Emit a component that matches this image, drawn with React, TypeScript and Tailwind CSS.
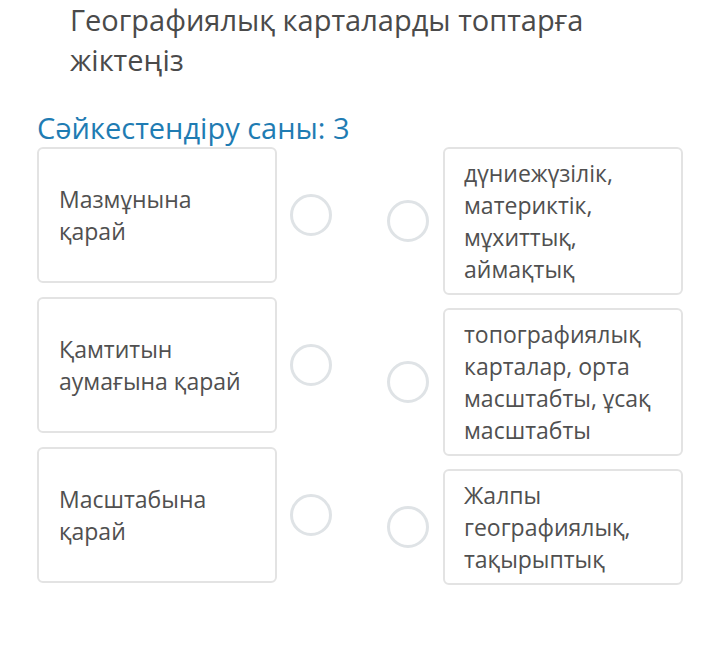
const left = [
  ["Мазмұнына", "қарай"],
  ["Қамтитын", "аумағына қарай"],
  ["Масштабына", "қарай"],
];

const right = [
  ["дүниежүзілік,", "материктік,", "мұхиттық,", "аймақтық"],
  ["топографиялық", "карталар, орта", "масштабты, ұсақ", "масштабты"],
  ["Жалпы", "географиялық,", "тақырыптық"],
];

function Dot() {
  return <div className="h-[42px] w-[42px] shrink-0 rounded-full border-[3px] border-[#dfe3e6] bg-white" />;
}

export default function App() {
  return (
    <div className="h-[654px] w-[720px] bg-white font-['Open_Sans',sans-serif]">
      <h1 className="pl-[70px] pr-[100px] text-[29px] leading-[40px] text-[#4a4a4a]">
        Географиялық карталарды топтарға жіктеңіз
      </h1>
      <div className="mt-[30px] pl-[37px] text-[29px] leading-[36px] text-[#1f7cb3]">
        Сәйкестендіру саны: 3
      </div>
      <div className="mt-[1px] flex pl-[37px]">
        <div className="flex flex-col gap-[14px]">
          {left.map((lines, i) => (
            <div key={i} className="flex items-center">
              <div className="flex h-[136px] w-[240px] flex-col justify-center rounded-[6px] border-2 border-[#e3e3e3] px-[20px] text-[23px] leading-[32px] text-[#505050]">
                {lines.map((l) => (
                  <span key={l}>{l}</span>
                ))}
              </div>
              <div className="ml-[13px]">
                <Dot />
              </div>
            </div>
          ))}
        </div>
        <div className="ml-[55px] flex flex-col gap-[13px]">
          {right.map((lines, i) => (
            <div key={i} className="flex items-center">
              <Dot />
              <div className="ml-[14px] flex w-[240px] flex-col rounded-[6px] border-2 border-[#e3e3e3] px-[19px] py-[8px] text-[23px] leading-[32px] text-[#505050]">
                {lines.map((l) => (
                  <span key={l}>{l}</span>
                ))}
              </div>
            </div>
          ))}
        </div>
      </div>
    </div>
  );
}
